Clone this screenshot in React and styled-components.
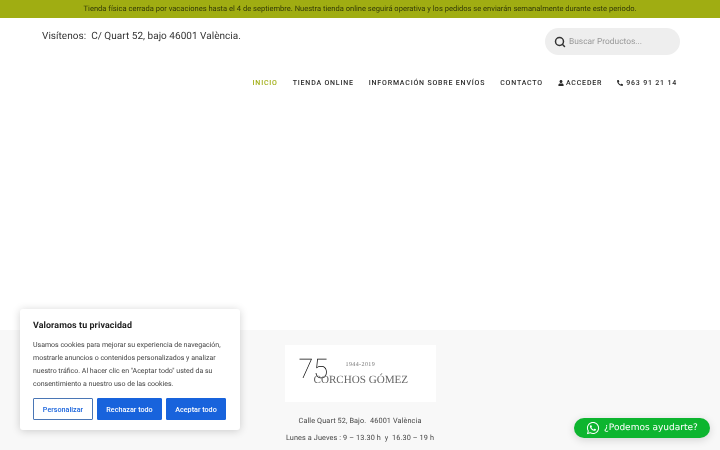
import React from "react";
import styled, { createGlobalStyle } from "styled-components";
import { FaWhatsapp, FaUser, FaPhone } from "react-icons/fa";
import { FiSearch } from "react-icons/fi";

const Global = createGlobalStyle`
  html, body { margin: 0; padding: 0; background: #fff; }
  body {
    font-family: Roboto, "Liberation Sans", sans-serif; overflow: hidden;
    text-rendering: geometricPrecision; -webkit-font-smoothing: antialiased;
  }
  * { box-sizing: border-box; }
`;
const Page = styled.div`
  height: 450px; overflow: hidden; display: flex; flex-direction: column; will-change: transform;
`;
const Notice = styled.div`
  height: 18px; background: #a0ad12; color: #333a08;
  font-size: 7.55px; line-height: 18px; text-align: center; flex: none;
`;
const Header = styled.header`
  height: 312px; flex: none; display: flex; flex-direction: column;
  padding: 10px 40px 0 42px;
`;
const TopRow = styled.div`
  display: flex; justify-content: space-between; align-items: flex-start;
`;
const Address = styled.p`
  margin: 1px 0 0; font-size: 10px; line-height: 16px; color: #333; letter-spacing: .03px;
`;
const Search = styled.div`
  width: 135px; height: 27px; border-radius: 14px; background: #eeeeee;
  display: flex; align-items: center; gap: 3px; padding-left: 9px;
  color: #333; font-size: 8.4px;
`;
const Placeholder = styled.span` color: #999; `;
const Nav = styled.nav`
  display: flex; justify-content: flex-end; gap: 15px; margin-top: 22px; margin-right: 3px;
`;
const NavItem = styled.a`
  font-size: 7px; font-weight: 500; letter-spacing: .81px; line-height: 12px;
  text-transform: uppercase; color: ${p => (p.$active ? "#a0ad12" : "#2c2c2c")};
  display: inline-flex; align-items: center; gap: 2px; white-space: nowrap;
`;
const Footer = styled.footer`
  flex: 1; background: #f8f8f8; display: flex; flex-direction: column; align-items: center;
  padding: 15px 0 0;
`;
const Logo = styled.div`
  width: 151px; height: 57px; background: #fff; position: relative; font-family: "Liberation Serif", serif;
  color: #333; flex: none;
`;
const LogoNum = styled.span`
  position: absolute; left: 14px; top: 11px; font-family: Roboto, sans-serif; font-weight: 100;
  font-size: 27px; line-height: 27px; color: #000;
`;
const LogoYears = styled.span`
  position: absolute; left: 61px; top: 16px; font-size: 6px; line-height: 8px; letter-spacing: .4px; color: #777;
`;
const LogoName = styled.span`
  position: absolute; left: 29px; top: 29px; font-size: 11.1px; line-height: 13px; color: #666; white-space: nowrap;
`;
const FooterLine = styled.p`
  margin: ${p => p.$gap}px 0 0; font-size: 7.3px; line-height: 12px; color: #444; letter-spacing: .1px; white-space: pre;
  text-align: center;
`;
const Cookie = styled.aside`
  position: fixed; left: 20px; top: 309px; width: 220px; height: 121px; background: #fff; border-radius: 3px;
  box-shadow: 0 1px 8px rgba(0,0,0,.18); padding: 11px 13px 0;
`;
const CookieTitle = styled.h2`
  margin: 0; font-size: 8.9px; line-height: 12px; font-weight: 700; color: #212121; letter-spacing: .1px;
`;
const CookieText = styled.p`
  margin: 7px 0 0; font-size: 7px; line-height: 13px; color: #444;
`;
const Buttons = styled.div`
  display: flex; gap: 4px; margin-top: 7px;
`;
const CookieButton = styled.button`
  height: 22px; padding: 0; width: ${p => p.$w}px; border-radius: 1px; font: 500 7.2px Roboto, sans-serif;
  background: ${p => (p.$outline ? "#fff" : "#1863dc")};
  color: ${p => (p.$outline ? "#1863dc" : "#fff")};
  border: ${p => (p.$outline ? "1.5px solid #4a76b5" : "1px solid #1863dc")};
`;
const Whats = styled.a`
  position: fixed; left: 574px; top: 418px; width: 136px; height: 20px; border-radius: 10px; background: #0db52f;
  color: #fff; display: flex; align-items: center; gap: 4px; padding-left: 12px;
  font-family: "DejaVu Sans", sans-serif; font-size: 9px; box-shadow: 0 2px 8px rgba(0,0,0,.15);
`;

export default function App() {
  return (
    <Page>
      <Global />
      <Notice>Tienda física cerrada por vacaciones hasta el 4 de septiembre. Nuestra tienda online seguirá operativa y los pedidos se enviarán semanalmente durante este periodo.</Notice>
      <Header>
        <TopRow>
          <Address>Visítenos:&nbsp; C/ Quart 52, bajo 46001 València.</Address>
          <Search>
            <FiSearch size={12} strokeWidth={3} />
            <Placeholder>Buscar Productos...</Placeholder>
          </Search>
        </TopRow>
        <Nav>
          <NavItem $active>Inicio</NavItem>
          <NavItem>Tienda online</NavItem>
          <NavItem>Información sobre envíos</NavItem>
          <NavItem>Contacto</NavItem>
          <NavItem><FaUser size={6} />Acceder</NavItem>
          <NavItem><FaPhone size={6} style={{ transform: "scaleX(-1)", marginRight: 1 }} />963 91 21 14</NavItem>
        </Nav>
      </Header>
      <Footer>
        <Logo>
          <LogoNum>75</LogoNum>
          <LogoYears>1944-2019</LogoYears>
          <LogoName>CORCHOS GÓMEZ</LogoName>
        </Logo>
        <FooterLine $gap={13}>Calle Quart 52, Bajo.  46001 València</FooterLine>
        <FooterLine $gap={5}>Lunes a Jueves : 9 – 13.30 h  y  16.30 – 19 h</FooterLine>
      </Footer>
      <Cookie>
        <CookieTitle>Valoramos tu privacidad</CookieTitle>
        <CookieText>Usamos cookies para mejorar su experiencia de navegación, mostrarle anuncios o contenidos personalizados y analizar nuestro tráfico. Al hacer clic en "Aceptar todo" usted da su consentimiento a nuestro uso de las cookies.</CookieText>
        <Buttons>
          <CookieButton $outline $w={60}>Personalizar</CookieButton>
          <CookieButton $w={65}>Rechazar todo</CookieButton>
          <CookieButton $w={60}>Aceptar todo</CookieButton>
        </Buttons>
      </Cookie>
      <Whats><FaWhatsapp size={14} />¿Podemos ayudarte?</Whats>
    </Page>
  );
}
